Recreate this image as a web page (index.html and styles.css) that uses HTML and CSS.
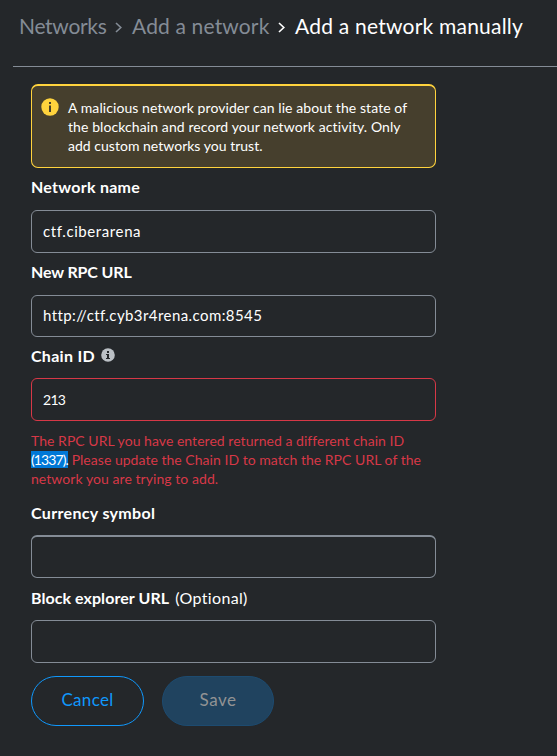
FILE: index.html
```html
<!DOCTYPE html>
<html lang="en">
<head>
<meta charset="utf-8">
<title>Add a network manually</title>
<link rel="stylesheet" href="styles.css">
</head>
<body>
<nav class="crumbs">
  <a class="crumb crumb-root">Networks</a>
  <svg class="chevron" width="7" height="11" viewBox="0 0 7 11"><path d="M1 1 5.8 5.5 1 10"/></svg>
  <a class="crumb crumb-add">Add a network</a>
  <svg class="chevron current" width="7" height="11" viewBox="0 0 7 11"><path d="M1 1 5.8 5.5 1 10"/></svg>
  <span class="crumb crumb-manual current">Add a network manually</span>
</nav>
<main class="form">
  <div class="warning">
    <svg class="warning-icon" width="18" height="18" viewBox="0 0 18 18"><circle cx="9" cy="9" r="8.7" fill="#ffd33d"/><path d="M8 4h2v2H8zM8 7.5h2V14H8z" fill="#463f2d"/></svg>
    <p class="warning-text"><span class="w1">A malicious network provider can lie about the state of</span><br><span class="w2">the blockchain and record your network activity. Only</span><br><span class="w3">add custom networks you trust.</span></p>
  </div>
  <div class="label name-label">Network name</div>
  <div class="input name-input">ctf.ciberarena</div>
  <div class="label rpc-label">New RPC URL</div>
  <div class="input rpc-input">http://ctf.cyb3r4rena.com:8545</div>
  <div class="label chain-label">Chain ID<svg class="info" width="14" height="14" viewBox="0 0 14 14"><circle cx="7" cy="7" r="6.8" fill="#bbc0c5"/><path d="M6 3h2v2H6zM5 6h3v4h1v1H5v-1h1V7H5z" fill="#24272a"/></svg></div>
  <div class="input chain-input">213</div>
  <p class="error"><span class="e1">The RPC URL you have entered returned a different chain ID</span><br><span class="selected">(1337).</span><span class="e2"> Please update the Chain ID to match the RPC URL of the</span><br><span class="e3">network you are trying to add.</span></p>
  <div class="label symbol-label">Currency symbol</div>
  <div class="input symbol-input"></div>
  <div class="label explorer-label">Block explorer URL<span class="optional">(Optional)</span></div>
  <div class="input explorer-input"></div>
  <div class="actions">
    <button class="btn cancel">Cancel</button>
    <button class="btn save" disabled>Save</button>
  </div>
</main>
</body>
</html>
```
FILE: styles.css
```css
* { box-sizing: border-box; }
body { margin: 0; background: #24272a; color: #fff; font-family: Lato, "Liberation Sans", sans-serif; overflow: hidden; }
p { margin: 0; }
.crumbs { display: flex; align-items: center; height: 67px; margin-left: 13px; padding: 0 0 14px 6px; border-bottom: 1px solid #848c96; color: #848c96; font-size: 21px; line-height: 28px; white-space: nowrap; }
.crumb-root { width: 87px; letter-spacing: -.3px; }
.crumb-add { width: 137px; letter-spacing: .15px; }
.crumb-manual { letter-spacing: .22px; }
.chevron { flex: none; margin: 3px 10px 0 9px; fill: none; stroke: #848c96; stroke-width: 1.6; }
.current { color: #fff; }
.chevron.current { stroke: #fff; margin-right: 10px; }
.form { width: 405px; margin-left: 31px; padding-top: 17px; }
.warning { display: flex; height: 84px; padding: 12px 0 0 9px; border: 1px solid #ffd33d; border-top-width: 2px; border-radius: 7px; background: #463f2d; }
.warning-icon { flex: none; margin-right: 9px; }
.warning-text { font-size: 14px; line-height: 19px; white-space: nowrap; }
.w1 { letter-spacing: .08px; }
.w2 { letter-spacing: .09px; }
.w3 { letter-spacing: .02px; }
.label { height: 24px; margin: 7px 0 10px; font-size: 16px; font-weight: 700; line-height: 24px; white-space: nowrap; }
.name-label { margin-bottom: 11px; letter-spacing: .26px; }
.rpc-label { margin-bottom: 11px; letter-spacing: -.13px; }
.chain-label { display: flex; letter-spacing: .29px; }
.info { margin: 4px 0 0 6px; }
.symbol-label { margin-top: 13px; letter-spacing: .33px; }
.explorer-label { margin-top: 8px; letter-spacing: .06px; }
.optional { margin-left: 6px; font-weight: 400; letter-spacing: .36px; }
.input { height: 43px; padding-left: 11px; border: 1px solid #848c96; border-radius: 6px; font-size: 15px; line-height: 40px; white-space: nowrap; }
.name-input { letter-spacing: .6px; }
.rpc-input { height: 42px; line-height: 39px; letter-spacing: .42px; }
.chain-input { border-color: #d73847; font-size: 14px; line-height: 42px; letter-spacing: -.7px; }
.symbol-input { border-top-width: 2px; }
.error { margin-top: 10px; color: #d73847; font-size: 14px; line-height: 19px; white-space: nowrap; }
.e1 { letter-spacing: .04px; }
.selected { background: #0078d7; color: #fff; letter-spacing: -.89px; }
.e2 { letter-spacing: .03px; }
.e3 { letter-spacing: .06px; }
.actions { display: flex; gap: 18px; margin-top: 13px; }
.btn { height: 50px; padding: 0 0 2px; border: 1px solid #1098fc; border-radius: 25px; background: none; color: #1098fc; font: 400 17px/46px Lato, sans-serif; letter-spacing: .3px; }
.cancel { width: 113px; }
.save { width: 112px; border-color: #1d4b70; background: #20435f; color: #929394; letter-spacing: .5px; }
```
